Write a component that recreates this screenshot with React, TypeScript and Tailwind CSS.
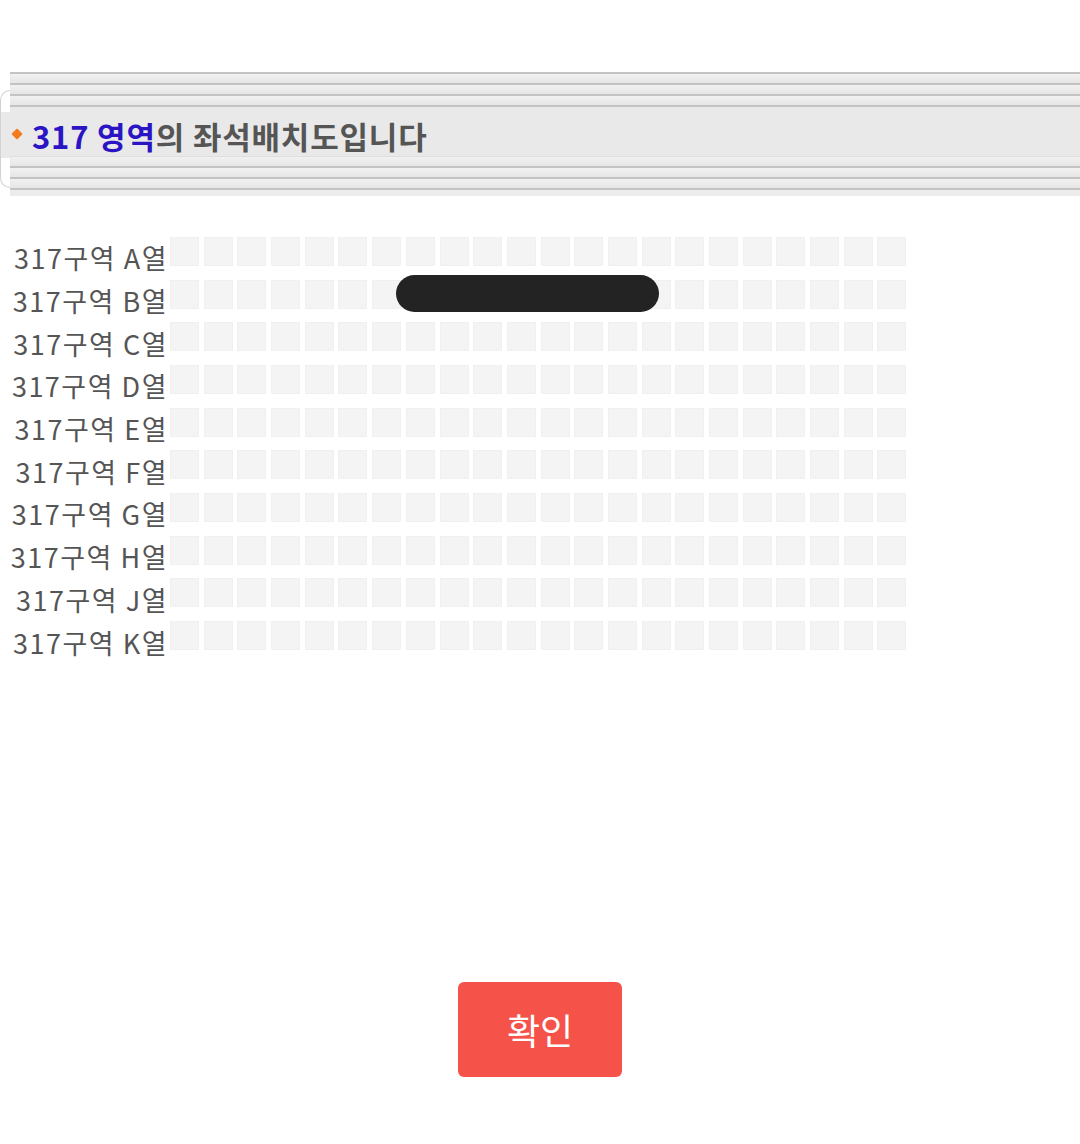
const ROWS = ['A', 'B', 'C', 'D', 'E', 'F', 'G', 'H', 'J', 'K'];
const COLS = Array.from({ length: 22 }, (_, i) => i);

function Stripes() {
  return (
    <>
      <div className="h-[2px] bg-[#c3c3c3]" />
      <div className="h-[9px] bg-gradient-to-b from-[#f1f1f1] to-[#e6e6e6]" />
    </>
  );
}

function Header() {
  return (
    <div className="mt-[72px] flex">
      <div className="w-[10px] shrink-0 pt-[18px]">
        <div className="flex h-[98px] flex-col rounded-l-[10px] border border-r-0 border-[#d2d2d2]">
          <div className="h-[21px]" />
          <div className="h-[46px] bg-[#e9e9e9]" />
        </div>
      </div>
      <div className="flex-1 bg-[#ececec]">
        <Stripes />
        <Stripes />
        <Stripes />
        <div className="h-[2px] bg-[#c3c3c3]" />
        <div className="flex h-[50px] items-center border-b border-[#dedede] bg-[#e9e9e9]">
          <span className="ml-[3px] mr-[11px] mt-[5px] inline-block h-[8px] w-[8px] rotate-45 rounded-[1px] bg-[#f27a1f]" />
          <h1 className="pt-[8px] text-[31px] font-bold leading-none tracking-[0.8px] text-[#555555] [font-family:'Noto_Sans_CJK_KR',sans-serif]">
            <span className="text-[#2a14c4]">317 영역</span>의 좌석배치도입니다
          </h1>
        </div>
        <div className="h-[9px] bg-gradient-to-b from-[#f1f1f1] to-[#e6e6e6]" />
        <Stripes />
        <Stripes />
        <div className="h-[2px] bg-[#c3c3c3]" />
        <div className="h-[6px] bg-[#ececec]" />
      </div>
    </div>
  );
}

function SeatRow({ row }: { row: string }) {
  return (
    <div className="flex h-[42.7px] items-center">
      <div className="w-[168px] shrink-0 pt-[13px] text-right text-[27px] leading-none tracking-[1.5px] text-[#555555] [font-family:'Noto_Sans_CJK_KR',sans-serif]">
        317구역 {row}열
      </div>
      <div className="ml-[2px] flex gap-x-[4.7px]">
        {COLS.map((c) => (
          <div key={c} className="h-[29px] w-[29px] border border-[#f0f0f0] bg-[#f4f4f4]" />
        ))}
      </div>
    </div>
  );
}

export default function App() {
  return (
    <div className="flex h-[1144px] w-[1080px] flex-col overflow-hidden bg-white">
      <Header />
      <div className="relative mt-[34px]">
        {ROWS.map((r) => (
          <SeatRow key={r} row={r} />
        ))}
        <div className="absolute left-[396px] top-[45px] h-[37px] w-[263px] rounded-full bg-[#232323]" />
      </div>
      <div className="mt-[325px] flex justify-center">
        <button className="flex h-[95px] w-[164px] items-center justify-center rounded-[6px] bg-[#f5524a] text-[36px] text-white [font-family:'Noto_Sans_CJK_KR',sans-serif]">
          확인
        </button>
      </div>
    </div>
  );
}
